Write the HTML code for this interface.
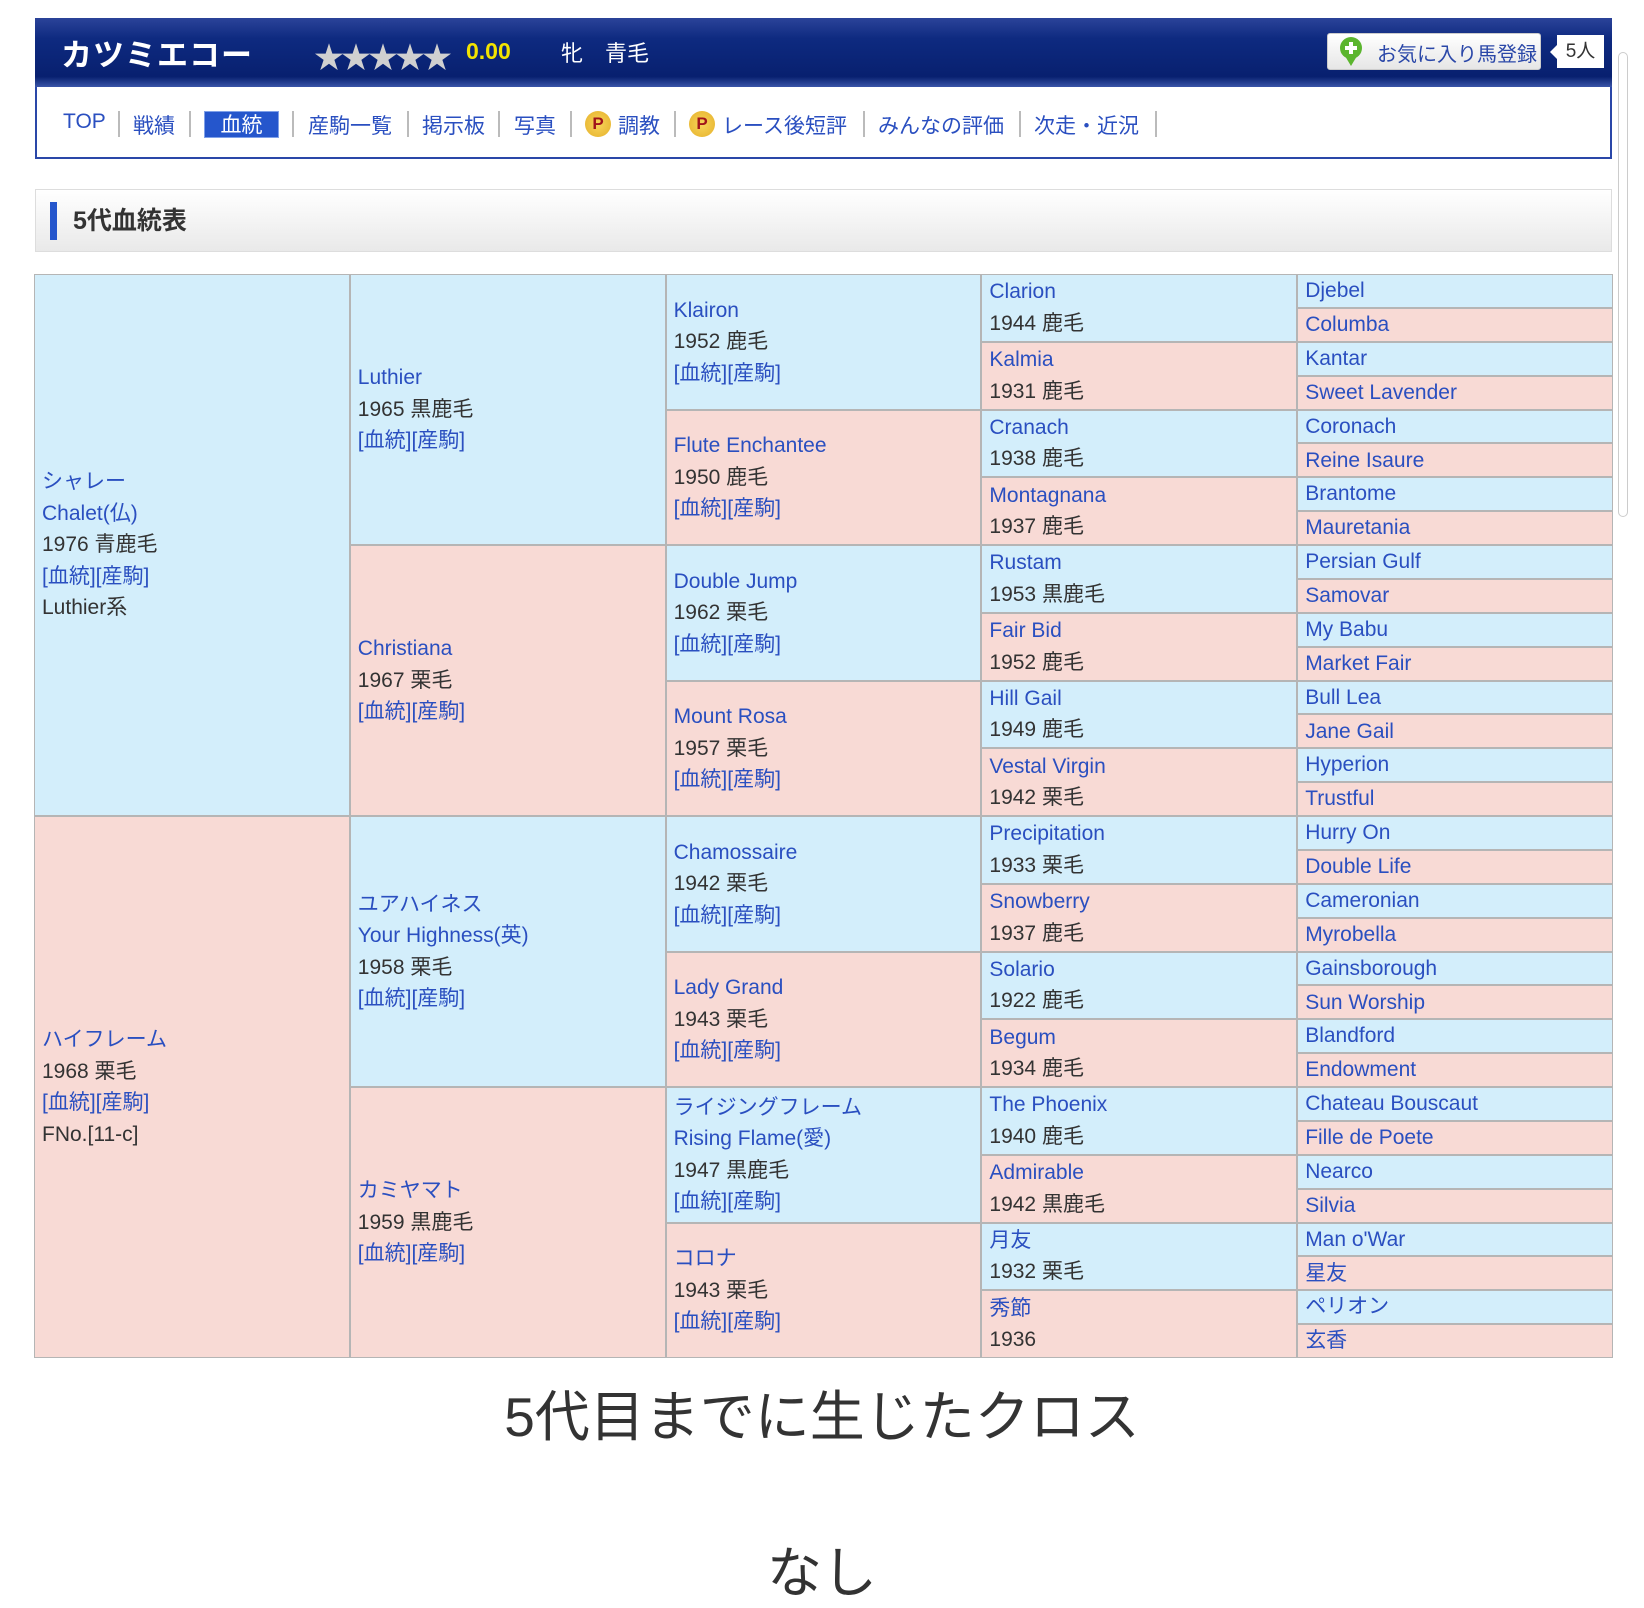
<!DOCTYPE html>
<html><head><meta charset="utf-8"><style>
body{margin:0;width:1644px;height:1601px;background:#fff;font-family:"Liberation Sans","Noto Sans CJK JP",sans-serif;position:relative;overflow:hidden;color:#333}
.hdr{position:absolute;left:35px;top:18px;width:1577px;height:69px;background:linear-gradient(#2b4399 0%,#0e2a80 30%,#08206f 85%,#3a55a8 100%);}
.name{position:absolute;left:26px;top:12px;color:#fff;font-size:31px;font-weight:bold;letter-spacing:1px}
.stars{position:absolute;left:279px;top:15px;color:#d0d0d0;font-size:30px;letter-spacing:-3px}
.score{position:absolute;left:431px;top:20px;color:#f2e300;font-size:23px;font-weight:bold}
.sex{position:absolute;left:526px;top:18px;color:#fff;font-size:22px}
.fav{position:absolute;left:1292px;top:15px;width:214px;height:37px;background:linear-gradient(#fff,#e6e6e6);border-radius:3px;border:1px solid #ccc;box-sizing:border-box}
.fav span{position:absolute;left:49px;top:4px;color:#2a47a8;font-size:20px}
.pin{position:absolute;left:12px;top:3px;width:22px;height:22px;border-radius:50%;background:#5bb52e}
.pin:before{content:"";position:absolute;left:9px;top:5px;width:4px;height:12px;background:#fff}
.pin:after{content:"";position:absolute;left:5px;top:9px;width:12px;height:4px;background:#fff}
.pt{position:absolute;left:17px;top:22px;width:0;height:0;border-left:6px solid transparent;border-right:6px solid transparent;border-top:10px solid #5bb52e}
.cnt{position:absolute;left:1522px;top:17px;width:47px;height:33px;background:#fff;color:#333;font-size:19px;text-align:center;line-height:33px}
.cnt:before{content:"";position:absolute;left:-7px;top:10px;border-top:7px solid transparent;border-bottom:7px solid transparent;border-right:7px solid #fff}
.nav{position:absolute;left:35px;top:87px;width:1577px;height:72px;border:2px solid #2a47a8;border-top:none;box-sizing:border-box;background:#fff}
.nav a{position:absolute;top:23px;font-size:21px;color:#2a4fc0;text-decoration:none;white-space:nowrap}
.nav i{position:absolute;top:24px;width:2px;height:26px;background:#bbb}
.nav .act{background:#2556cc;color:#fff;top:24px;left:167px;width:75px;height:27px;text-align:center;line-height:27px;border:1px solid #7fa0e8;box-sizing:border-box}
.p{position:absolute;top:24px;width:26px;height:26px;border-radius:50%;background:radial-gradient(#f8d45a,#e5b12b);color:#a0141a;font-weight:bold;font-size:17px;text-align:center;line-height:26px}
.ttl{position:absolute;left:35px;top:189px;width:1577px;height:63px;border:1px solid #ddd;box-sizing:border-box;background:linear-gradient(#fff,#e9e9e9)}
.ttl b{position:absolute;left:14px;top:12px;width:7px;height:38px;background:#2556cc}
.ttl span{position:absolute;left:37px;top:11px;font-size:25px;font-weight:bold;color:#333}
.grid{position:absolute;left:34px;top:274px;width:1579px;height:1084px;display:grid;grid-template-columns:repeat(5,1fr);grid-template-rows:repeat(32,1fr);gap:2px;background:#b5b5b5;border:1px solid #b5b5b5;box-sizing:border-box;grid-auto-flow:column}
.grid div{display:flex;flex-direction:column;justify-content:center;padding-left:7px;font-size:21px;line-height:31.5px;white-space:nowrap;overflow:hidden}
.b{background:#d3eefb}.k{background:#f8dad5}
.grid a{color:#2a4fc0;text-decoration:none}
.s{position:absolute;left:1618px;top:52px;width:8px;height:463px;border:1px solid #ccc;border-radius:5px}
.big{position:absolute;left:0;width:1644px;text-align:center;font-size:55px;color:#333}
</style></head><body>
<div class="hdr">
<div class="name">カツミエコー</div>
<div class="stars">★★★★★</div>
<div class="score">0.00</div>
<div class="sex">牝　青毛</div>
<div class="fav"><div class="pt"></div><div class="pin"></div><span>お気に入り馬登録</span></div>
<div class="cnt">5人</div>
</div>
<div class="nav">
<a style="left:26px">TOP</a><i style="left:81px"></i>
<a style="left:96px">戦績</a><i style="left:152px"></i>
<a class="act">血統</a><i style="left:255px"></i>
<a style="left:271px">産駒一覧</a><i style="left:370px"></i>
<a style="left:385px">掲示板</a><i style="left:461px"></i>
<a style="left:477px">写真</a><i style="left:533px"></i>
<span class="p" style="left:548px">P</span><a style="left:581px">調教</a><i style="left:637px"></i>
<span class="p" style="left:652px">P</span><a style="left:685px">レース後短評</a><i style="left:826px"></i>
<a style="left:841px">みんなの評価</a><i style="left:982px"></i>
<a style="left:997px">次走・近況</a><i style="left:1118px"></i>
</div>
<div class="s"></div>
<div class="ttl"><b></b><span>5代血統表</span></div>
<div class="grid">
<div class="b" style="grid-row:span 16"><a>シャレー</a><a>Chalet(仏)</a><span>1976 青鹿毛</span><a>[血統][産駒]</a><span>Luthier系</span></div>
<div class="k" style="grid-row:span 16"><a>ハイフレーム</a><span>1968 栗毛</span><a>[血統][産駒]</a><span>FNo.[11-c]</span></div>
<div class="b" style="grid-row:span 8"><a>Luthier</a><span>1965 黒鹿毛</span><a>[血統][産駒]</a></div>
<div class="k" style="grid-row:span 8"><a>Christiana</a><span>1967 栗毛</span><a>[血統][産駒]</a></div>
<div class="b" style="grid-row:span 8"><a>ユアハイネス</a><a>Your Highness(英)</a><span>1958 栗毛</span><a>[血統][産駒]</a></div>
<div class="k" style="grid-row:span 8"><a>カミヤマト</a><span>1959 黒鹿毛</span><a>[血統][産駒]</a></div>
<div class="b" style="grid-row:span 4"><a>Klairon</a><span>1952 鹿毛</span><a>[血統][産駒]</a></div>
<div class="k" style="grid-row:span 4"><a>Flute Enchantee</a><span>1950 鹿毛</span><a>[血統][産駒]</a></div>
<div class="b" style="grid-row:span 4"><a>Double Jump</a><span>1962 栗毛</span><a>[血統][産駒]</a></div>
<div class="k" style="grid-row:span 4"><a>Mount Rosa</a><span>1957 栗毛</span><a>[血統][産駒]</a></div>
<div class="b" style="grid-row:span 4"><a>Chamossaire</a><span>1942 栗毛</span><a>[血統][産駒]</a></div>
<div class="k" style="grid-row:span 4"><a>Lady Grand</a><span>1943 栗毛</span><a>[血統][産駒]</a></div>
<div class="b" style="grid-row:span 4"><a>ライジングフレーム</a><a>Rising Flame(愛)</a><span>1947 黒鹿毛</span><a>[血統][産駒]</a></div>
<div class="k" style="grid-row:span 4"><a>コロナ</a><span>1943 栗毛</span><a>[血統][産駒]</a></div>
<div class="b" style="grid-row:span 2"><a>Clarion</a><span>1944 鹿毛</span></div>
<div class="k" style="grid-row:span 2"><a>Kalmia</a><span>1931 鹿毛</span></div>
<div class="b" style="grid-row:span 2"><a>Cranach</a><span>1938 鹿毛</span></div>
<div class="k" style="grid-row:span 2"><a>Montagnana</a><span>1937 鹿毛</span></div>
<div class="b" style="grid-row:span 2"><a>Rustam</a><span>1953 黒鹿毛</span></div>
<div class="k" style="grid-row:span 2"><a>Fair Bid</a><span>1952 鹿毛</span></div>
<div class="b" style="grid-row:span 2"><a>Hill Gail</a><span>1949 鹿毛</span></div>
<div class="k" style="grid-row:span 2"><a>Vestal Virgin</a><span>1942 栗毛</span></div>
<div class="b" style="grid-row:span 2"><a>Precipitation</a><span>1933 栗毛</span></div>
<div class="k" style="grid-row:span 2"><a>Snowberry</a><span>1937 鹿毛</span></div>
<div class="b" style="grid-row:span 2"><a>Solario</a><span>1922 鹿毛</span></div>
<div class="k" style="grid-row:span 2"><a>Begum</a><span>1934 鹿毛</span></div>
<div class="b" style="grid-row:span 2"><a>The Phoenix</a><span>1940 鹿毛</span></div>
<div class="k" style="grid-row:span 2"><a>Admirable</a><span>1942 黒鹿毛</span></div>
<div class="b" style="grid-row:span 2"><a>月友</a><span>1932 栗毛</span></div>
<div class="k" style="grid-row:span 2"><a>秀節</a><span>1936</span></div>
<div class="b"><a>Djebel</a></div><div class="k"><a>Columba</a></div>
<div class="b"><a>Kantar</a></div><div class="k"><a>Sweet Lavender</a></div>
<div class="b"><a>Coronach</a></div><div class="k"><a>Reine Isaure</a></div>
<div class="b"><a>Brantome</a></div><div class="k"><a>Mauretania</a></div>
<div class="b"><a>Persian Gulf</a></div><div class="k"><a>Samovar</a></div>
<div class="b"><a>My Babu</a></div><div class="k"><a>Market Fair</a></div>
<div class="b"><a>Bull Lea</a></div><div class="k"><a>Jane Gail</a></div>
<div class="b"><a>Hyperion</a></div><div class="k"><a>Trustful</a></div>
<div class="b"><a>Hurry On</a></div><div class="k"><a>Double Life</a></div>
<div class="b"><a>Cameronian</a></div><div class="k"><a>Myrobella</a></div>
<div class="b"><a>Gainsborough</a></div><div class="k"><a>Sun Worship</a></div>
<div class="b"><a>Blandford</a></div><div class="k"><a>Endowment</a></div>
<div class="b"><a>Chateau Bouscaut</a></div><div class="k"><a>Fille de Poete</a></div>
<div class="b"><a>Nearco</a></div><div class="k"><a>Silvia</a></div>
<div class="b"><a>Man o'War</a></div><div class="k"><a>星友</a></div>
<div class="b"><a>ペリオン</a></div><div class="k"><a>玄香</a></div>
</div>
<div class="big" style="top:1372px">5代目までに生じたクロス</div>
<div class="big" style="top:1528px">なし</div>
</body></html>
